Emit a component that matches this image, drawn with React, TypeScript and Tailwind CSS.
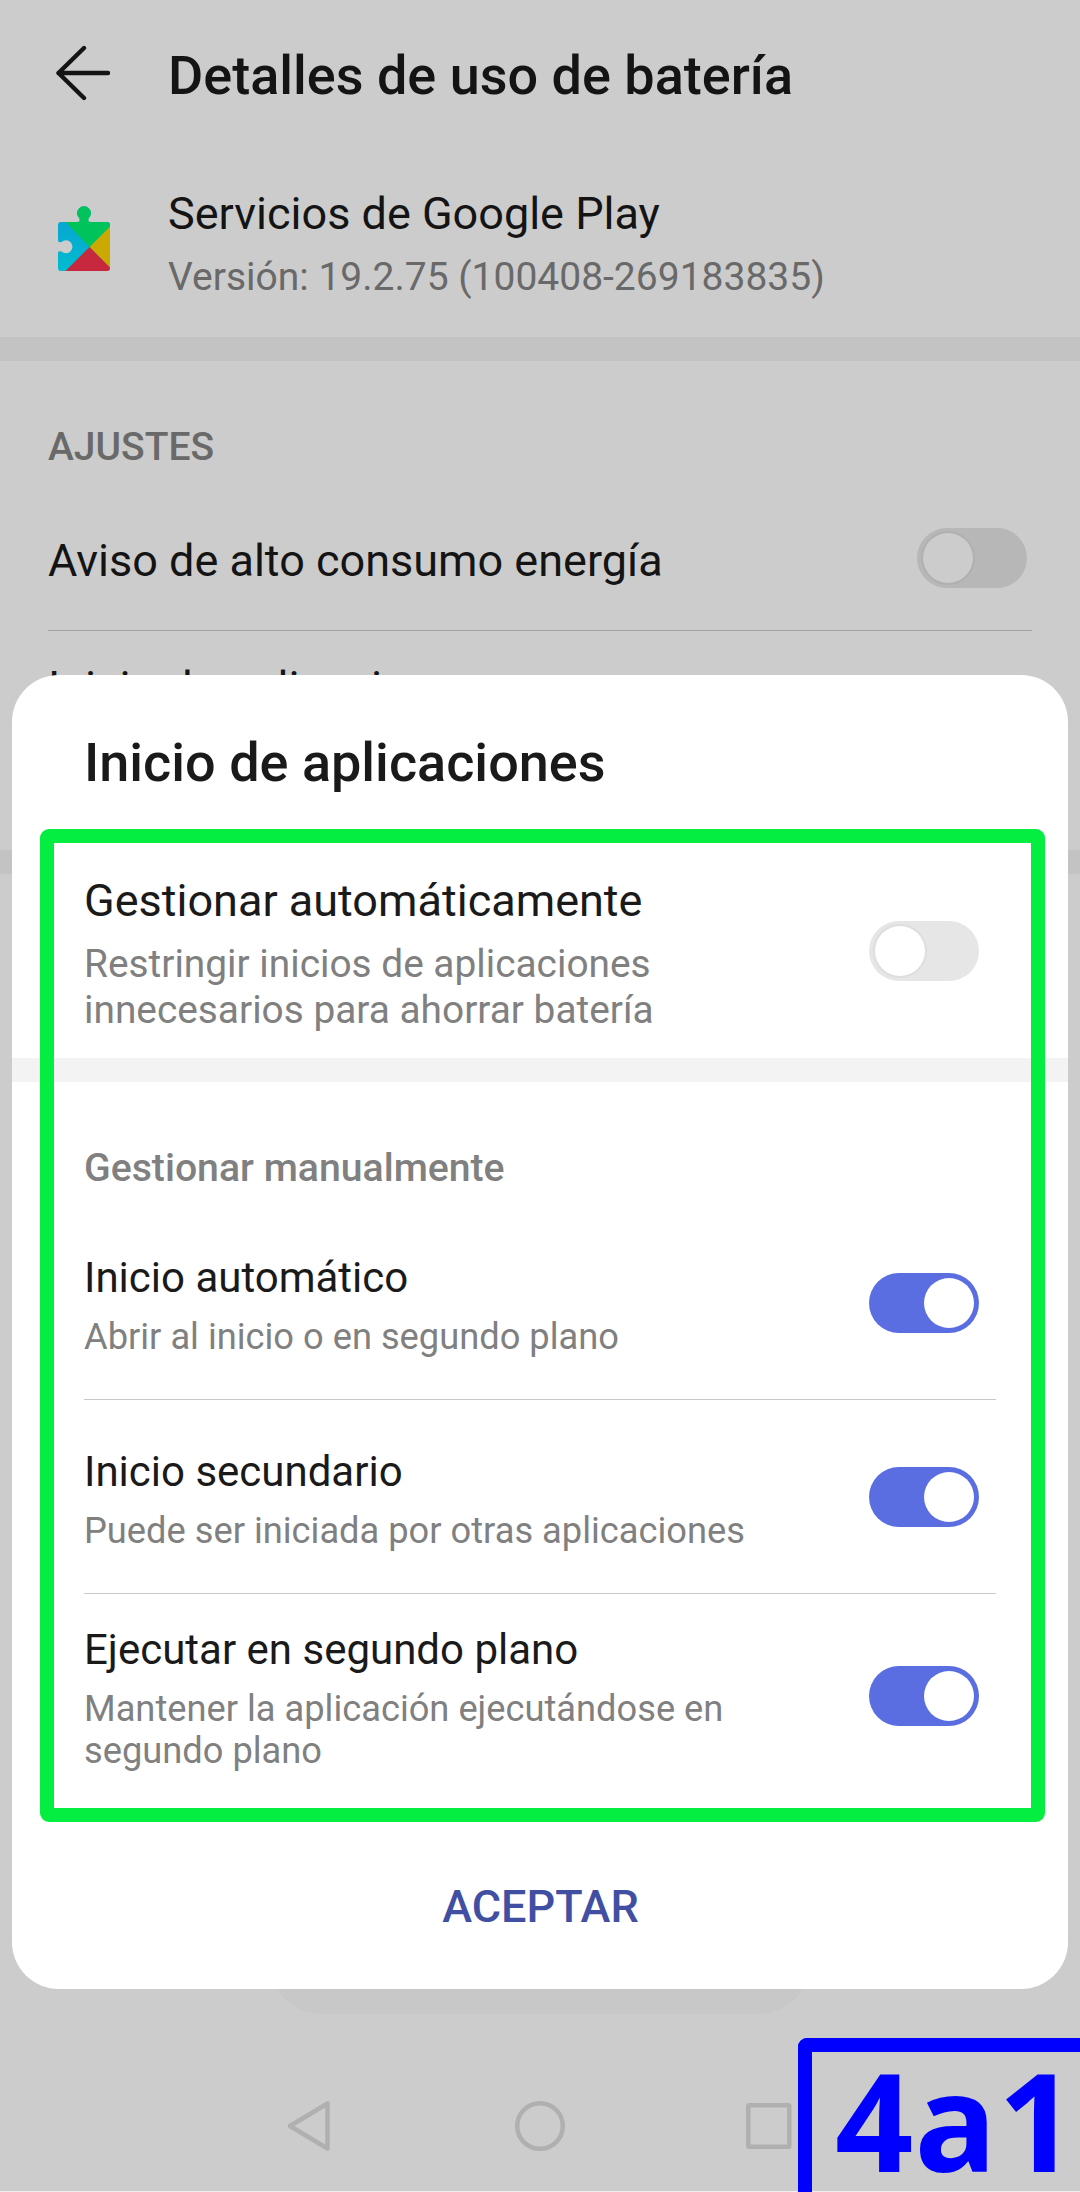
import { useState } from 'react';
import clsx from 'clsx';

type ManualOption = {
    id: string;
    title: string;
    description: string;
    rowClass: string;
    switchClass: string;
};

const manualOptions: ManualOption[] = [
    {
        id: 'auto',
        title: 'Inicio automático',
        description: 'Abrir al inicio o en segundo plano',
        rowClass: 'h-[168px] pt-[21px] border-b border-[#c8c8c8]',
        switchClass: 'mt-5',
    },
    {
        id: 'secondary',
        title: 'Inicio secundario',
        description: 'Puede ser iniciada por otras aplicaciones',
        rowClass: 'h-[194px] pt-[47px] border-b border-[#c8c8c8]',
        switchClass: 'mt-5',
    },
    {
        id: 'background',
        title: 'Ejecutar en segundo plano',
        description: 'Mantener la aplicación ejecutándose en segundo plano',
        rowClass: 'h-[228px] pt-[31px]',
        switchClass: 'mt-[41px]',
    },
];

function Switch({ on, dimmed, className, onClick }: { on: boolean; dimmed?: boolean; className?: string; onClick?: () => void }) {
    return (
        <button
            type="button"
            role="switch"
            aria-checked={on}
            onClick={onClick}
            className={clsx(
                'flex h-[60px] w-[110px] shrink-0 items-center rounded-full px-[5.5px]',
                on ? 'justify-end bg-[#5a6ee1]' : 'justify-start',
                !on && (dimmed ? 'bg-[#b7b7b7]' : 'bg-[#e6e6e6]'),
                className
            )}
        >
            <span
                className={clsx(
                    'size-[50px] rounded-full',
                    dimmed ? 'bg-[#cccccc] shadow-[0_0_0_2px_#b0b0b0]' : 'bg-white',
                    !on && !dimmed && 'shadow-[0_0_0_2px_#dedede]'
                )}
            />
        </button>
    );
}

function BackArrow() {
    return (
        <svg width="56" height="56" viewBox="0 0 56 56" fill="none" stroke="#141414" strokeWidth="4.4" strokeLinecap="round" strokeLinejoin="round">
            <path d="M2.500 28H52M28 3L2.500 28L28 53" />
        </svg>
    );
}

function PlayServicesIcon() {
    return (
        <svg width="52" height="66" viewBox="0 0 52 66">
            <defs>
                <linearGradient id="blue" x1="0" y1="0" x2="0" y2="1">
                    <stop offset="0" stopColor="#0b9fd2" />
                    <stop offset="1" stopColor="#00bccf" />
                </linearGradient>
                <clipPath id="piece">
                    <path d="M3 16H20Q22.5 16 21.5 12.5A6.9 6.9 0 1 1 30.5 12.5Q29.5 16 32 16H49Q52 16 52 19V62Q52 65 49 65H3Q0 65 0 62V47Q0 44.5 3.5 45.5A6.5 6.5 0 1 0 3.5 36Q0 37 0 34.5V19Q0 16 3 16Z" />
                </clipPath>
            </defs>
            <g clipPath="url(#piece)">
                <path d="M0 0H52V66H0Z" fill="url(#blue)" />
                <path d="M6.500 15V0H52V21L31.500 41Z" fill="#00c35b" />
                <path d="M52 20.500V62L31.500 41Z" fill="#cbaa00" />
                <path d="M31.500 41L52 61.500V66H6.500Z" fill="#c8283e" />
            </g>
        </svg>
    );
}

function NavigationBar() {
    return (
        <nav className="flex h-[130px] items-center border-b border-[#eeeeee] pb-px pl-[287px]">
            <svg width="505" height="52" viewBox="0 0 505 52" fill="none" stroke="#b0b0b0" strokeWidth="4.500" strokeLinejoin="round">
                <path d="M40.500 3.500V48.500L3 26Z" />
                <circle cx="253" cy="26" r="22.800" />
                <rect x="461.300" y="5.300" width="41" height="41.400" rx="1" />
            </svg>
        </nav>
    );
}

export default function App() {
    const [autoManage, setAutoManage] = useState(false);
    const [enabled, setEnabled] = useState<Record<string, boolean>>({ auto: true, secondary: true, background: true });

    const toggle = (id: string) => setEnabled((prev) => ({ ...prev, [id]: !prev[id] }));

    return (
        <div className="relative h-[2192px] w-[1080px] overflow-hidden bg-[#cccccc] font-[Roboto,sans-serif] text-[#141414]">
            {/* Dimmed page behind the sheet */}
            <div className="flex h-full flex-col">
                <header className="flex h-[187px] items-start pt-[44px] pl-14">
                    <div className="mt-px"><BackArrow /></div>
                    <h1 className="ml-14 text-[54px] leading-[64px] font-medium">Detalles de uso de batería</h1>
                </header>

                <section className="flex h-[150px] items-start pl-[58px]">
                    <div className="mt-[19px]"><PlayServicesIcon /></div>
                    <div className="ml-[58px]">
                        <p className="text-[45px] leading-[54px]">Servicios de Google Play</p>
                        <p className="mt-[13px] text-[39px] leading-[46px] text-[#696969]">Versión: 19.2.75 (100408-269183835)</p>
                    </div>
                </section>

                <div className="h-6 bg-[#c3c3c3]" />

                <section className="h-[489px] px-12 pt-[63px]">
                    <h2 className="text-[39px] leading-[46px] font-medium text-[#696969]">AJUSTES</h2>
                    <div className="mt-[58px] flex h-[103px] items-start justify-between border-b border-[#a3a3a3] pr-[5px]">
                        <p className="mt-[6px] text-[45px] leading-[54px]">Aviso de alto consumo energía</p>
                        <Switch on={false} dimmed />
                    </div>
                    <p className="mt-[30px] text-[45px] leading-[54px]">Inicio de aplicaciones</p>
                </section>

                <div className="h-6 bg-[#c3c3c3]" />

                <div className="flex flex-1 items-end justify-center pb-12">
                    <div className="h-[108px] w-[542px] rounded-full bg-[#c8c8c8]" />
                </div>

                <NavigationBar />
            </div>

            {/* Bottom sheet */}
            <div className="absolute top-[675px] left-3 h-[1314px] w-[1056px] rounded-[47px] bg-white text-[#1a1a1a]">
                <h2 className="h-[199px] pt-[56px] pl-[72px] text-[54px] leading-[64px] font-medium">Inicio de aplicaciones</h2>

                <div className="flex h-[184px] items-start justify-between pr-[89px] pl-[72px]">
                    <div className="w-[620px]">
                        <p className="text-[45px] leading-[54px]">Gestionar automáticamente</p>
                        <p className="mt-[13px] text-[38.85px] leading-[46px] text-[#808080]">
                            Restringir inicios de aplicaciones innecesarios para ahorrar batería
                        </p>
                    </div>
                    <Switch on={autoManage} className="mt-[47px]" onClick={() => setAutoManage(!autoManage)} />
                </div>

                <div className="h-6 bg-[#f3f3f3]" />

                <h3 className="h-[150px] pt-[63px] pl-[72px] text-[39.2px] leading-[46px] font-medium text-[#808080]">Gestionar manualmente</h3>

                <div className="pr-[72px] pl-[72px]">
                    {manualOptions.map((option) => (
                        <div key={option.id} className={clsx('flex items-start justify-between pr-[17px]', option.rowClass)}>
                            <div className="w-[670px]">
                                <p className="text-[42px] leading-[50px]">{option.title}</p>
                                <p className="mt-[13px] text-[36.25px] leading-[42px] text-[#808080]">{option.description}</p>
                            </div>
                            <Switch on={enabled[option.id]} className={option.switchClass} onClick={() => toggle(option.id)} />
                        </div>
                    ))}
                </div>

                <button type="button" className="mt-[58px] block w-full pl-px text-center text-[45px] leading-[54px] font-medium text-[#414fa2]">
                    ACEPTAR
                </button>
            </div>

            {/* Highlight around the launch options */}
            <div className="pointer-events-none absolute top-[829px] left-10 h-[993px] w-[1005px] rounded-[9px] border-[14px] border-[#04ee42]" />

            {/* Step label */}
            <div className="absolute right-0 bottom-0 h-[154px] w-[282px] rounded-tl-[9px] border-t-[14px] border-l-[14px] border-[#0000ff] pl-[23px] font-['Open_Sans',sans-serif] text-[137px] leading-[134px] font-bold tracking-[1px] text-[#0000ff]">
                4a1
            </div>
        </div>
    );
}
